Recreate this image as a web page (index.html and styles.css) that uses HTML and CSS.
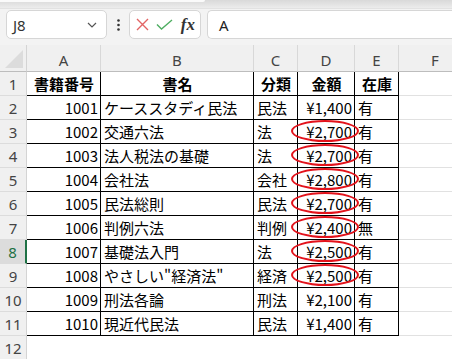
FILE: index.html
```html
<!DOCTYPE html>
<html lang="ja">
<head>
<meta charset="utf-8">
<link rel="stylesheet" href="styles.css">
</head>
<body>
<div class="top"><div class="toppanel"></div></div>
<div class="fbar">
  <div class="namebox"><span class="ref">J8</span>
    <svg class="chev" width="10" height="6" viewBox="0 0 10 6"><path d="M1 1 L5 5 L9 1" fill="none" stroke="#555" stroke-width="1.2"/></svg>
  </div>
  <div class="dots"><svg width="3" height="12" viewBox="0 0 3 12"><circle cx="1.5" cy="1.5" r="1.3" fill="#333"/><circle cx="1.5" cy="6" r="1.3" fill="#333"/><circle cx="1.5" cy="10.5" r="1.3" fill="#333"/></svg></div>
  <div class="btns">
    <svg width="13" height="13" viewBox="0 0 13 13"><path d="M1 1 L12 12 M12 1 L1 12" stroke="#e26464" stroke-width="1.4" fill="none"/></svg>
    <svg width="17" height="11" viewBox="0 0 17 11"><path d="M1 5.5 L5.5 10 L16 1" stroke="#4fae62" stroke-width="1.4" fill="none"/></svg>
    <span class="fx">fx</span>
  </div>
  <div class="input">A</div>
</div>
<div class="sheet">
  <div class="corner"><svg width="18" height="18" viewBox="0 0 18 18"><path d="M18 0 L18 18 L0 18 Z" fill="#dcdcdc"/></svg></div>
  <div class="ch">A</div><div class="ch">B</div><div class="ch">C</div><div class="ch">D</div><div class="ch">E</div><div class="ch last">F</div>

  <div class="rh">1</div><div class="c b hd">書籍番号</div><div class="c b hd">書名</div><div class="c b hd">分類</div><div class="c b hd">金額</div><div class="c b hd">在庫</div><div class="c g"></div>

  <div class="rh">2</div><div class="c b r">1001</div><div class="c b">ケーススタディ民法</div><div class="c b">民法</div><div class="c b r">¥1,400</div><div class="c b">有</div><div class="c g"></div>

  <div class="rh">3</div><div class="c b r">1002</div><div class="c b">交通六法</div><div class="c b">法</div><div class="c b r"><span class="ring"></span>¥2,700</div><div class="c b">有</div><div class="c g"></div>

  <div class="rh">4</div><div class="c b r">1003</div><div class="c b">法人税法の基礎</div><div class="c b">法</div><div class="c b r"><span class="ring"></span>¥2,700</div><div class="c b">有</div><div class="c g"></div>

  <div class="rh">5</div><div class="c b r">1004</div><div class="c b">会社法</div><div class="c b">会社</div><div class="c b r"><span class="ring"></span>¥2,800</div><div class="c b">有</div><div class="c g"></div>

  <div class="rh">6</div><div class="c b r">1005</div><div class="c b">民法総則</div><div class="c b">民法</div><div class="c b r"><span class="ring"></span>¥2,700</div><div class="c b">有</div><div class="c g"></div>

  <div class="rh">7</div><div class="c b r">1006</div><div class="c b">判例六法</div><div class="c b">判例</div><div class="c b r"><span class="ring"></span>¥2,400</div><div class="c b">無</div><div class="c g"></div>

  <div class="rh sel">8</div><div class="c b r">1007</div><div class="c b">基礎法入門</div><div class="c b">法</div><div class="c b r"><span class="ring"></span>¥2,500</div><div class="c b">有</div><div class="c g"></div>

  <div class="rh">9</div><div class="c b r">1008</div><div class="c b">やさしい"経済法"</div><div class="c b">経済</div><div class="c b r"><span class="ring"></span>¥2,500</div><div class="c b">有</div><div class="c g"></div>

  <div class="rh">10</div><div class="c b r">1009</div><div class="c b">刑法各論</div><div class="c b">刑法</div><div class="c b r">¥2,100</div><div class="c b">有</div><div class="c g"></div>

  <div class="rh">11</div><div class="c b r">1010</div><div class="c b">現近代民法</div><div class="c b">民法</div><div class="c b r">¥1,400</div><div class="c b">有</div><div class="c g"></div>

  <div class="rh">12</div><div class="c g"></div><div class="c g"></div><div class="c g"></div><div class="c g"></div><div class="c g"></div><div class="c g"></div>
</div>
</body>
</html>
```

FILE: styles.css
```css
html, body {
  margin: 0;
  padding: 0;
}
body {
  width: 452px;
  height: 359px;
  overflow: hidden;
  background: #f3f3f3;
  font-family: "Noto Sans", "Noto Sans CJK JP", sans-serif;
}
.top {
  height: 9px;
  background: linear-gradient(#d9d9d9, #ececec);
  border-bottom: 1px solid #e2e2e2;
  box-sizing: border-box;
}
.toppanel {
  width: 205px;
  height: 2px;
  background: #fafafa;
  border-bottom-right-radius: 4px;
}
.fbar {
  height: 36px;
  display: flex;
  align-items: flex-start;
  padding: 1px 0 0 6px;
  box-sizing: border-box;
}
.namebox, .btns, .input {
  height: 29px;
  box-sizing: border-box;
  background: #fff;
  border: 1px solid #d6d6d6;
  border-radius: 5px;
  display: flex;
  align-items: center;
  flex-shrink: 0;
}
.namebox {
  width: 101px;
  padding: 0 9px 0 6px;
  justify-content: space-between;
}
.ref {
  font-size: 15px;
  color: #333;
}
.dots {
  width: 22px;
  height: 29px;
  flex-shrink: 0;
  display: flex;
  align-items: center;
  justify-content: center;
}
.btns {
  width: 72px;
  padding: 0 5px 0 6px;
  justify-content: space-between;
}
.fx {
  font-family: "Liberation Serif", serif;
  font-style: italic;
  font-weight: bold;
  font-size: 17px;
  color: #333;
  line-height: 1;
}
.input {
  margin-left: 6px;
  flex: 1 1 auto;
  flex-shrink: 1;
  min-width: 0;
  padding-left: 11px;
  font-size: 15px;
  color: #222;
  border-right: none;
  border-radius: 5px 0 0 5px;
}
.sheet {
  display: grid;
  grid-template-columns: 27px 74px 153px 44px 57px 44px 1fr;
  grid-template-rows: 27px repeat(12, 24px);
}
.sheet > div {
  box-sizing: border-box;
  white-space: nowrap;
}
.corner {
  background: #f0f0f0;
  border-right: 1px solid #d4d4d4;
  border-bottom: 1px solid #bdbdbd;
  display: flex;
  align-items: flex-end;
  justify-content: flex-end;
  padding: 0 3px 3px 0;
}
.ch {
  background: #f0f0f0;
  border-right: 1px solid #d8d8d8;
  border-bottom: 1px solid #bdbdbd;
  font-size: 15px;
  color: #444;
  display: flex;
  align-items: center;
  justify-content: center;
  padding-top: 4px;
}
.ch.last {
  border-right: none;
  padding-left: 19px;
}
.rh {
  background: #f0f0f0;
  border-right: 1px solid #d4d4d4;
  border-bottom: 1px solid #dcdcdc;
  font-size: 15px;
  color: #444;
  display: flex;
  align-items: center;
  justify-content: center;
}
.rh.sel {
  background: #dcdcdc;
  color: #1e7145;
  border-right: 2px solid #1e7145;
}
.c {
  background: #fff;
  font-family: "Noto Sans CJK JP", sans-serif;
  font-size: 15px;
  color: #000;
  display: flex;
  align-items: center;
  padding: 0 2px 0 3px;
  position: relative;
}
.c.b {
  border-right: 1px solid #000;
  border-bottom: 1px solid #000;
}
.c.g {
  border-bottom: 1px solid #e1e1e1;
}
.c.r {
  justify-content: flex-end;
}
.c.hd {
  justify-content: center;
  font-weight: bold;
}
.ring {
  position: absolute;
  left: -7px;
  top: 0px;
  width: 68px;
  height: 22px;
  box-sizing: border-box;
  border: 2px solid #e3121b;
  border-radius: 50%;
  z-index: 2;
}
```
